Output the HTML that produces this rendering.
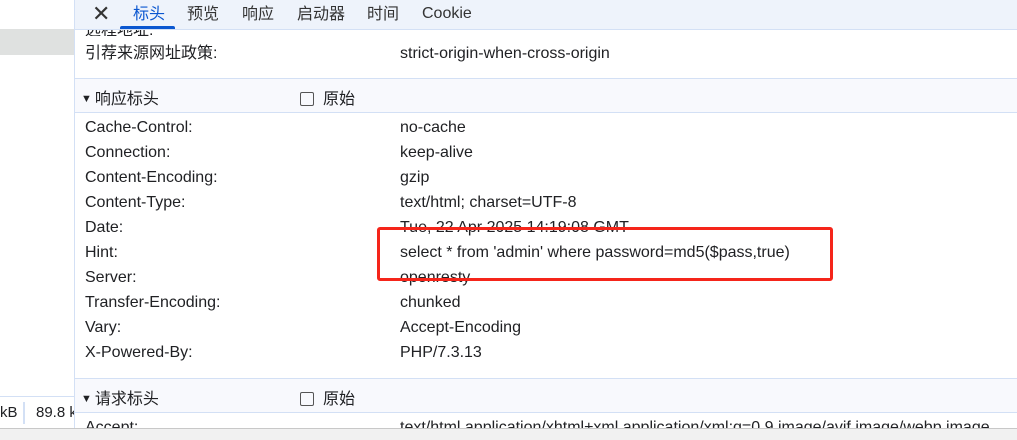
<!DOCTYPE html><html><head><meta charset="utf-8"><style>
body{margin:0;width:1017px;height:439px;overflow:hidden;background:#fff;font-family:"Liberation Sans","Noto Sans CJK SC",sans-serif;font-size:16px;color:#202124;position:relative}
.a{position:absolute;white-space:nowrap}
.t{position:absolute;top:1px;height:27px;line-height:27px;white-space:nowrap;color:#333}
.row{position:absolute;left:85px;height:25px;line-height:25px}
.v{position:absolute;left:315px;white-space:nowrap}
.cb{display:inline-block;width:12px;height:12px;border:1.5px solid #555;border-radius:2px;vertical-align:-2px;margin-right:9px}
.tri{font-size:11px;vertical-align:2px;margin-right:3px}
</style></head><body>
<div class="a" style="left:0;top:0;width:74px;height:428px;background:#fff"></div>
<div class="a" style="left:0;top:29px;width:74px;height:26px;background:#dfe1e0"></div>
<div class="a" style="left:0;top:396px;width:74px;height:1px;background:#d3e0f5"></div>
<div class="a" style="left:0;top:404px;font-size:15px">kB</div>
<div class="a" style="left:23px;top:402px;width:2px;height:22px;background:#d3e0f5"></div>
<div class="a" style="left:36px;top:404px;width:38px;overflow:hidden;font-size:15px">89.8 kB</div>
<div class="a" style="left:74px;top:0;width:1px;height:428px;background:#d3e0f5"></div>
<div class="a" style="left:75px;top:0;width:942px;height:29px;background:#eef3fb;border-bottom:1px solid #d3e0f5"></div>
<div class="a" style="left:92px;top:1px;font-size:22px;color:#333">✕</div>
<div class="t" style="left:133px;color:#0b57d0">标头</div>
<div class="a" style="left:120px;top:26px;width:55px;height:3px;background:#0b57d0;border-radius:2px 2px 0 0"></div>
<div class="t" style="left:187px">预览</div>
<div class="t" style="left:242px">响应</div>
<div class="t" style="left:297px">启动器</div>
<div class="t" style="left:367px">时间</div>
<div class="t" style="left:422px;top:0">Cookie</div>
<div class="a" style="left:85px;top:30px;height:6px;overflow:hidden;width:700px"><div style="margin-top:-14px;position:relative">远程地址:<span class="v" style="top:0">117.21.200.176:81</span></div></div>
<div class="row" style="top:41px">引荐来源网址政策:<span class="v">strict-origin-when-cross-origin</span></div>
<div class="a" style="left:75px;top:78px;width:942px;height:33px;background:#f8f9fd;border-top:1px solid #d3e0f5;border-bottom:1px solid #d3e0f5"></div>
<div class="a" style="left:81px;top:85px"><span class="tri">▼</span>响应标头</div>
<div class="a" style="left:300px;top:85px"><span class="cb"></span>原始</div>
<div class="row" style="top:115px">Cache-Control:<span class="v">no-cache</span></div>
<div class="row" style="top:140px">Connection:<span class="v">keep-alive</span></div>
<div class="row" style="top:165px">Content-Encoding:<span class="v">gzip</span></div>
<div class="row" style="top:190px">Content-Type:<span class="v">text/html; charset=UTF-8</span></div>
<div class="row" style="top:215px">Date:<span class="v">Tue, 22 Apr 2025 14:19:08 GMT</span></div>
<div class="row" style="top:240px">Hint:<span class="v">select * from 'admin' where password=md5($pass,true)</span></div>
<div class="row" style="top:265px">Server:<span class="v">openresty</span></div>
<div class="row" style="top:290px">Transfer-Encoding:<span class="v">chunked</span></div>
<div class="row" style="top:315px">Vary:<span class="v">Accept-Encoding</span></div>
<div class="row" style="top:340px">X-Powered-By:<span class="v">PHP/7.3.13</span></div>
<div class="a" style="left:377px;top:227px;width:450px;height:48px;border:3px solid #f5251a;border-radius:3px"></div>
<div class="a" style="left:75px;top:378px;width:942px;height:33px;background:#f8f9fd;border-top:1px solid #d3e0f5;border-bottom:1px solid #d3e0f5"></div>
<div class="a" style="left:81px;top:385px"><span class="tri">▼</span>请求标头</div>
<div class="a" style="left:300px;top:385px"><span class="cb"></span>原始</div>
<div class="row" style="top:415px">Accept:<span class="v">text/html,application/xhtml+xml,application/xml;q=0.9,image/avif,image/webp,image</span></div>
<div class="a" style="left:0;top:428px;width:1017px;height:11px;background:#f1f1f1;border-top:1px solid #c8c8c8"></div>
</body></html>
